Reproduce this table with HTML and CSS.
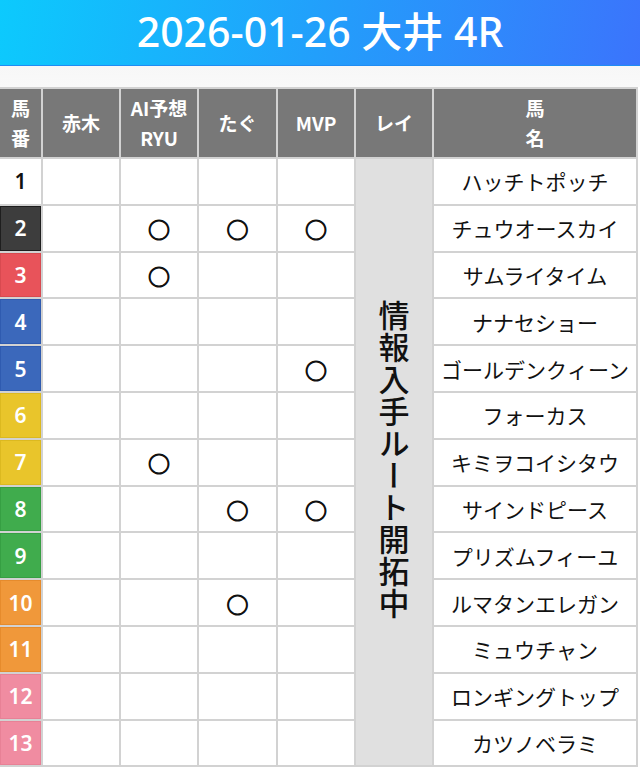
FILE: index.html
```html
<!DOCTYPE html>
<html lang="ja">
<head>
<meta charset="utf-8">
<title>2026-01-26 大井 4R</title>
<link rel="stylesheet" href="styles.css">
</head>
<body>
<header class="race-header">
  <h1 class="race-title">2026-01-26 大井 4R</h1>
</header>
<main class="content">
  <table class="picks">
    <colgroup>
      <col class="col-num">
      <col class="col-pick">
      <col class="col-pick">
      <col class="col-pick-wide">
      <col class="col-pick">
      <col class="col-pick">
      <col class="col-name">
    </colgroup>
    <thead>
      <tr>
        <th>馬<br>番</th>
        <th>赤木</th>
        <th>AI予想<br>RYU</th>
        <th>たぐ</th>
        <th>MVP</th>
        <th>レイ</th>
        <th>馬<br>名</th>
      </tr>
    </thead>
    <tbody>
      <tr>
        <td class="num waku1">1</td><td></td><td></td><td></td><td></td>
        <td class="rei" rowspan="13"><span class="rei-text">情報入手ルート開拓中</span></td>
        <td class="name">ハッチトポッチ</td>
      </tr>
      <tr>
        <td class="num waku2">2</td><td></td><td class="mark">○</td><td class="mark">○</td><td class="mark">○</td>
        <td class="name">チュウオースカイ</td>
      </tr>
      <tr>
        <td class="num waku3">3</td><td></td><td class="mark">○</td><td></td><td></td>
        <td class="name">サムライタイム</td>
      </tr>
      <tr>
        <td class="num waku4">4</td><td></td><td></td><td></td><td></td>
        <td class="name">ナナセショー</td>
      </tr>
      <tr>
        <td class="num waku4">5</td><td></td><td></td><td></td><td class="mark">○</td>
        <td class="name">ゴールデンクィーン</td>
      </tr>
      <tr>
        <td class="num waku5">6</td><td></td><td></td><td></td><td></td>
        <td class="name">フォーカス</td>
      </tr>
      <tr>
        <td class="num waku5">7</td><td></td><td class="mark">○</td><td></td><td></td>
        <td class="name">キミヲコイシタウ</td>
      </tr>
      <tr>
        <td class="num waku6">8</td><td></td><td></td><td class="mark">○</td><td class="mark">○</td>
        <td class="name">サインドピース</td>
      </tr>
      <tr>
        <td class="num waku6">9</td><td></td><td></td><td></td><td></td>
        <td class="name">プリズムフィーユ</td>
      </tr>
      <tr>
        <td class="num waku7">10</td><td></td><td></td><td class="mark">○</td><td></td>
        <td class="name">ルマタンエレガン</td>
      </tr>
      <tr>
        <td class="num waku7">11</td><td></td><td></td><td></td><td></td>
        <td class="name">ミュウチャン</td>
      </tr>
      <tr>
        <td class="num waku8">12</td><td></td><td></td><td></td><td></td>
        <td class="name">ロンギングトップ</td>
      </tr>
      <tr>
        <td class="num waku8">13</td><td></td><td></td><td></td><td></td>
        <td class="name">カツノベラミ</td>
      </tr>
    </tbody>
  </table>
</main>
</body>
</html>
```

FILE: styles.css
```css
html, body {
  margin: 0;
  padding: 0;
  background: #ffffff;
  font-family: "Noto Sans", "Noto Sans CJK JP", sans-serif;
}

.race-header {
  height: 65px;
  display: flex;
  align-items: center;
  justify-content: center;
  background: linear-gradient(100deg, #0ccafd 0%, #229ffb 50%, #3b74fc 100%);
  border-bottom: 1px solid #1f8cf3;
}

.race-title {
  margin: 0 0 2px;
  color: #ffffff;
  font-family: "Noto Sans", "Noto Sans CJK JP", sans-serif;
  font-size: 41px;
  font-weight: 500;
  line-height: 1;
  letter-spacing: 0;
}

.content {
  padding-top: 21px;
  background: linear-gradient(#f7f7f7 0, #f9f9f9 21px, #ffffff 21px);
}

.picks {
  width: 638px;
  table-layout: fixed;
  border-collapse: separate;
  border-spacing: 0;
  border-top: 2px solid #d2d2d2;
}

.col-num { width: 43px; }
.col-pick { width: 78px; }
.col-pick-wide { width: 79px; }
.col-name { width: 204px; }

.picks th,
.picks td {
  padding: 0;
  text-align: center;
  vertical-align: middle;
  border-right: 2px solid #d2d2d2;
  border-bottom: 2px solid #d2d2d2;
}

.picks thead tr {
  height: 70px;
}

.picks th {
  background: #787878;
  color: #ffffff;
  font-family: "Noto Sans CJK JP", sans-serif;
  font-size: 19px;
  font-weight: 700;
  line-height: 30px;
}

.picks tbody tr {
  height: 46.8px;
}

.num {
  font-family: "Noto Sans", "Noto Sans CJK JP", sans-serif;
  font-size: 21px;
  font-weight: 600;
  color: #ffffff;
}

.waku1 { background: #ffffff; color: #111111; }
.waku2 { background: #3d3d3d; box-shadow: inset 0 0 0 1px #1e1e1e; }
.waku3 { background: #e8535a; box-shadow: inset 0 0 0 1px #d84a50; }
.waku4 { background: #3b68bb; box-shadow: inset 0 0 0 1px #2f5bb0; }
.waku5 { background: #e9c52b; box-shadow: inset 0 0 0 1px #dcb920; }
.waku6 { background: #40ac4d; box-shadow: inset 0 0 0 1px #369f43; }
.waku7 { background: #f0983a; box-shadow: inset 0 0 0 1px #e68b2c; }
.waku8 { background: #f08ca1; box-shadow: inset 0 0 0 1px #e88196; }

.mark {
  font-family: "Noto Sans CJK JP", sans-serif;
  font-size: 22px;
  font-weight: 700;
  color: #111111;
  -webkit-text-stroke: 1px #111111;
}

.rei {
  background: #e0e0e0;
}

.rei-text {
  writing-mode: vertical-rl;
  font-family: "Noto Sans CJK JP", sans-serif;
  font-size: 31px;
  font-weight: 500;
  letter-spacing: 1px;
  color: #111111;
}

.name {
  font-family: "Noto Sans CJK JP", sans-serif;
  font-size: 21px;
  font-weight: 400;
  color: #111111;
  white-space: nowrap;
}
```
